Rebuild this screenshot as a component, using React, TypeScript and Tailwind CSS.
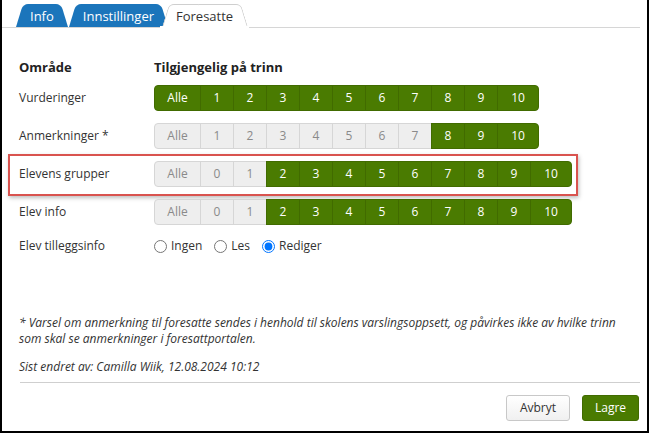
import React from "react";

const font = { fontFamily: '"Open Sans", "Noto Sans", sans-serif' };

type Row = {
    label: string;
    steps: string[];
    on: (s: string) => boolean;
};

const allSteps = ["Alle", "1", "2", "3", "4", "5", "6", "7", "8", "9", "10"];
const withZero = ["Alle", "0", "1", "2", "3", "4", "5", "6", "7", "8", "9", "10"];

const rows: Row[] = [
    { label: "Vurderinger", steps: allSteps, on: () => true },
    {
        label: "Anmerkninger *",
        steps: allSteps,
        on: (s) => ["8", "9", "10"].includes(s),
    },
    {
        label: "Elevens grupper",
        steps: withZero,
        on: (s) => !["Alle", "0", "1"].includes(s),
    },
    {
        label: "Elev info",
        steps: withZero,
        on: (s) => !["Alle", "0", "1"].includes(s),
    },
];

function Tab({ label, active, className = "" }: { label: string; active?: boolean; className?: string }) {
    if (active) {
        return (
            <div className={"relative flex h-[23px] items-center px-[12px] text-[13px] text-[#333] " + className}>
                <span className="absolute inset-y-0 left-[3px] w-[calc(50%-3px)] origin-bottom-left -skew-x-[17deg] rounded-tl-[5px] border-l border-t border-[#cfcfcf] bg-white" />
                <span className="absolute inset-y-0 right-[3px] w-[calc(50%-3px)] origin-bottom-right skew-x-[17deg] rounded-tr-[5px] border-r border-t border-[#cfcfcf] bg-white" />
                <span className="relative top-[1px] px-[5px]">{label}</span>
                <span className="absolute -bottom-[1px] left-[1px] right-[1px] h-[2px] bg-white" />
            </div>
        );
    }
    return (
        <div className={"relative flex h-[23px] items-center px-[12px] text-[13px] text-white " + className}>
            <span className="absolute inset-y-0 left-[3px] w-[calc(50%-3px)] origin-bottom-left -skew-x-[17deg] rounded-tl-[5px] bg-[#1b75bb]" />
            <span className="absolute inset-y-0 right-[3px] w-[calc(50%-3px)] origin-bottom-right skew-x-[17deg] rounded-tr-[5px] bg-[#1b75bb]" />
            <span className="relative top-[1px] px-[5px]">{label}</span>
        </div>
    );
}

function StepGroup({ steps, on }: { steps: string[]; on: (s: string) => boolean }) {
    return (
        <div className="flex h-[26px]">
            {steps.map((s, i) => {
                const active = on(s);
                const first = i === 0;
                const last = i === steps.length - 1;
                const width = s === "Alle" ? "w-[47px] " : s === "10" ? "w-[42px] " : "w-[34px] ";
                return (
                    <div
                        key={s}
                        className={
                            "flex h-full items-center justify-center text-[12px] " +
                            width +
                            (first ? "rounded-l-[4px] " : "") +
                            (last ? "rounded-r-[4px] " : "") +
                            (active
                                ? "border border-[#416b00] bg-[#4a7b01] text-white "
                                : "border border-[#d6d6d6] bg-[#eeeeee] text-[#8a8a8a] ") +
                            (first ? "" : "-ml-[1px]")
                        }
                    >
                        {s}
                    </div>
                );
            })}
        </div>
    );
}

export default function App() {
    return (
        <div
            className="relative h-[433px] w-[649px] overflow-hidden border-b-2 border-l-2 border-r-2 border-black bg-white text-[#333]"
            style={font}
        >
            <div className="mr-[7px] flex items-end border-b border-[#d6d6d6] pl-[11px] pt-[4px]">
                <Tab label="Info" />
                <Tab label="Innstillinger" className="-ml-[5px]" />
                <Tab label="Foresatte" active className="-ml-[12px]" />
            </div>

            <div className="pl-[17px] pr-[7px]">
                <div className="mt-[31px] flex h-[18px] items-center text-[13px] font-bold text-[#222]">
                    <div className="w-[135px]">Område</div>
                    <div>Tilgjengelig på trinn</div>
                </div>

                <div className="mt-[8px] flex flex-col gap-[12px]">
                    {rows.map((r) => (
                        <div key={r.label} className="relative flex items-center">
                            {r.label === "Elevens grupper" && (
                                <div className="pointer-events-none absolute -left-[11px] -top-[7px] h-[42px] w-[570px] border-2 border-[#d9534f] shadow-[1px_2px_4px_rgba(0,0,0,0.25)]" />
                            )}
                            <div className="w-[135px] text-[12px]">{r.label}</div>
                            <StepGroup steps={r.steps} on={r.on} />
                        </div>
                    ))}
                    <div className="mt-0 flex h-[18px] items-center text-[12px]">
                        <div className="w-[135px]">Elev tilleggsinfo</div>
                        <label className="flex items-center gap-[4px]">
                            <input type="radio" name="til" className="m-0 h-[13px] w-[13px] accent-[#0075ff]" />
                            Ingen
                        </label>
                        <label className="ml-[12px] flex items-center gap-[4px]">
                            <input type="radio" name="til" className="m-0 h-[13px] w-[13px] accent-[#0075ff]" />
                            Les
                        </label>
                        <label className="ml-[12px] flex items-center gap-[4px]">
                            <input type="radio" name="til" defaultChecked className="m-0 h-[13px] w-[13px] accent-[#0075ff]" />
                            Rediger
                        </label>
                    </div>
                </div>

                <p className="mt-[60px] text-[12px] italic leading-[16px]">
                    * Varsel om anmerkning til foresatte sendes i henhold til skolens varslingsoppsett, og påvirkes ikke av hvilke trinn
                    <br />
                    som skal se anmerkninger i foresattportalen.
                </p>
                <p className="mt-[12px] text-[12px] italic leading-[16px]">
                    Sist endret av: Camilla Wiik, 12.08.2024 10:12
                </p>

                <div className="ml-[1px] mt-[7px] border-t border-[#cfcfcf]" />

                <div className="mt-[12px] flex justify-end gap-[12px] pr-[1px]">
                    <button className="h-[26px] w-[64px] rounded-[3px] border border-[#c8c8c8] bg-gradient-to-b from-white to-[#f0f0f0] text-[12px] text-[#333]">
                        Avbryt
                    </button>
                    <button className="h-[26px] w-[57px] rounded-[3px] border border-[#416b00] bg-[#4a7b01] text-[12px] text-white">
                        Lagre
                    </button>
                </div>
            </div>
        </div>
    );
}
